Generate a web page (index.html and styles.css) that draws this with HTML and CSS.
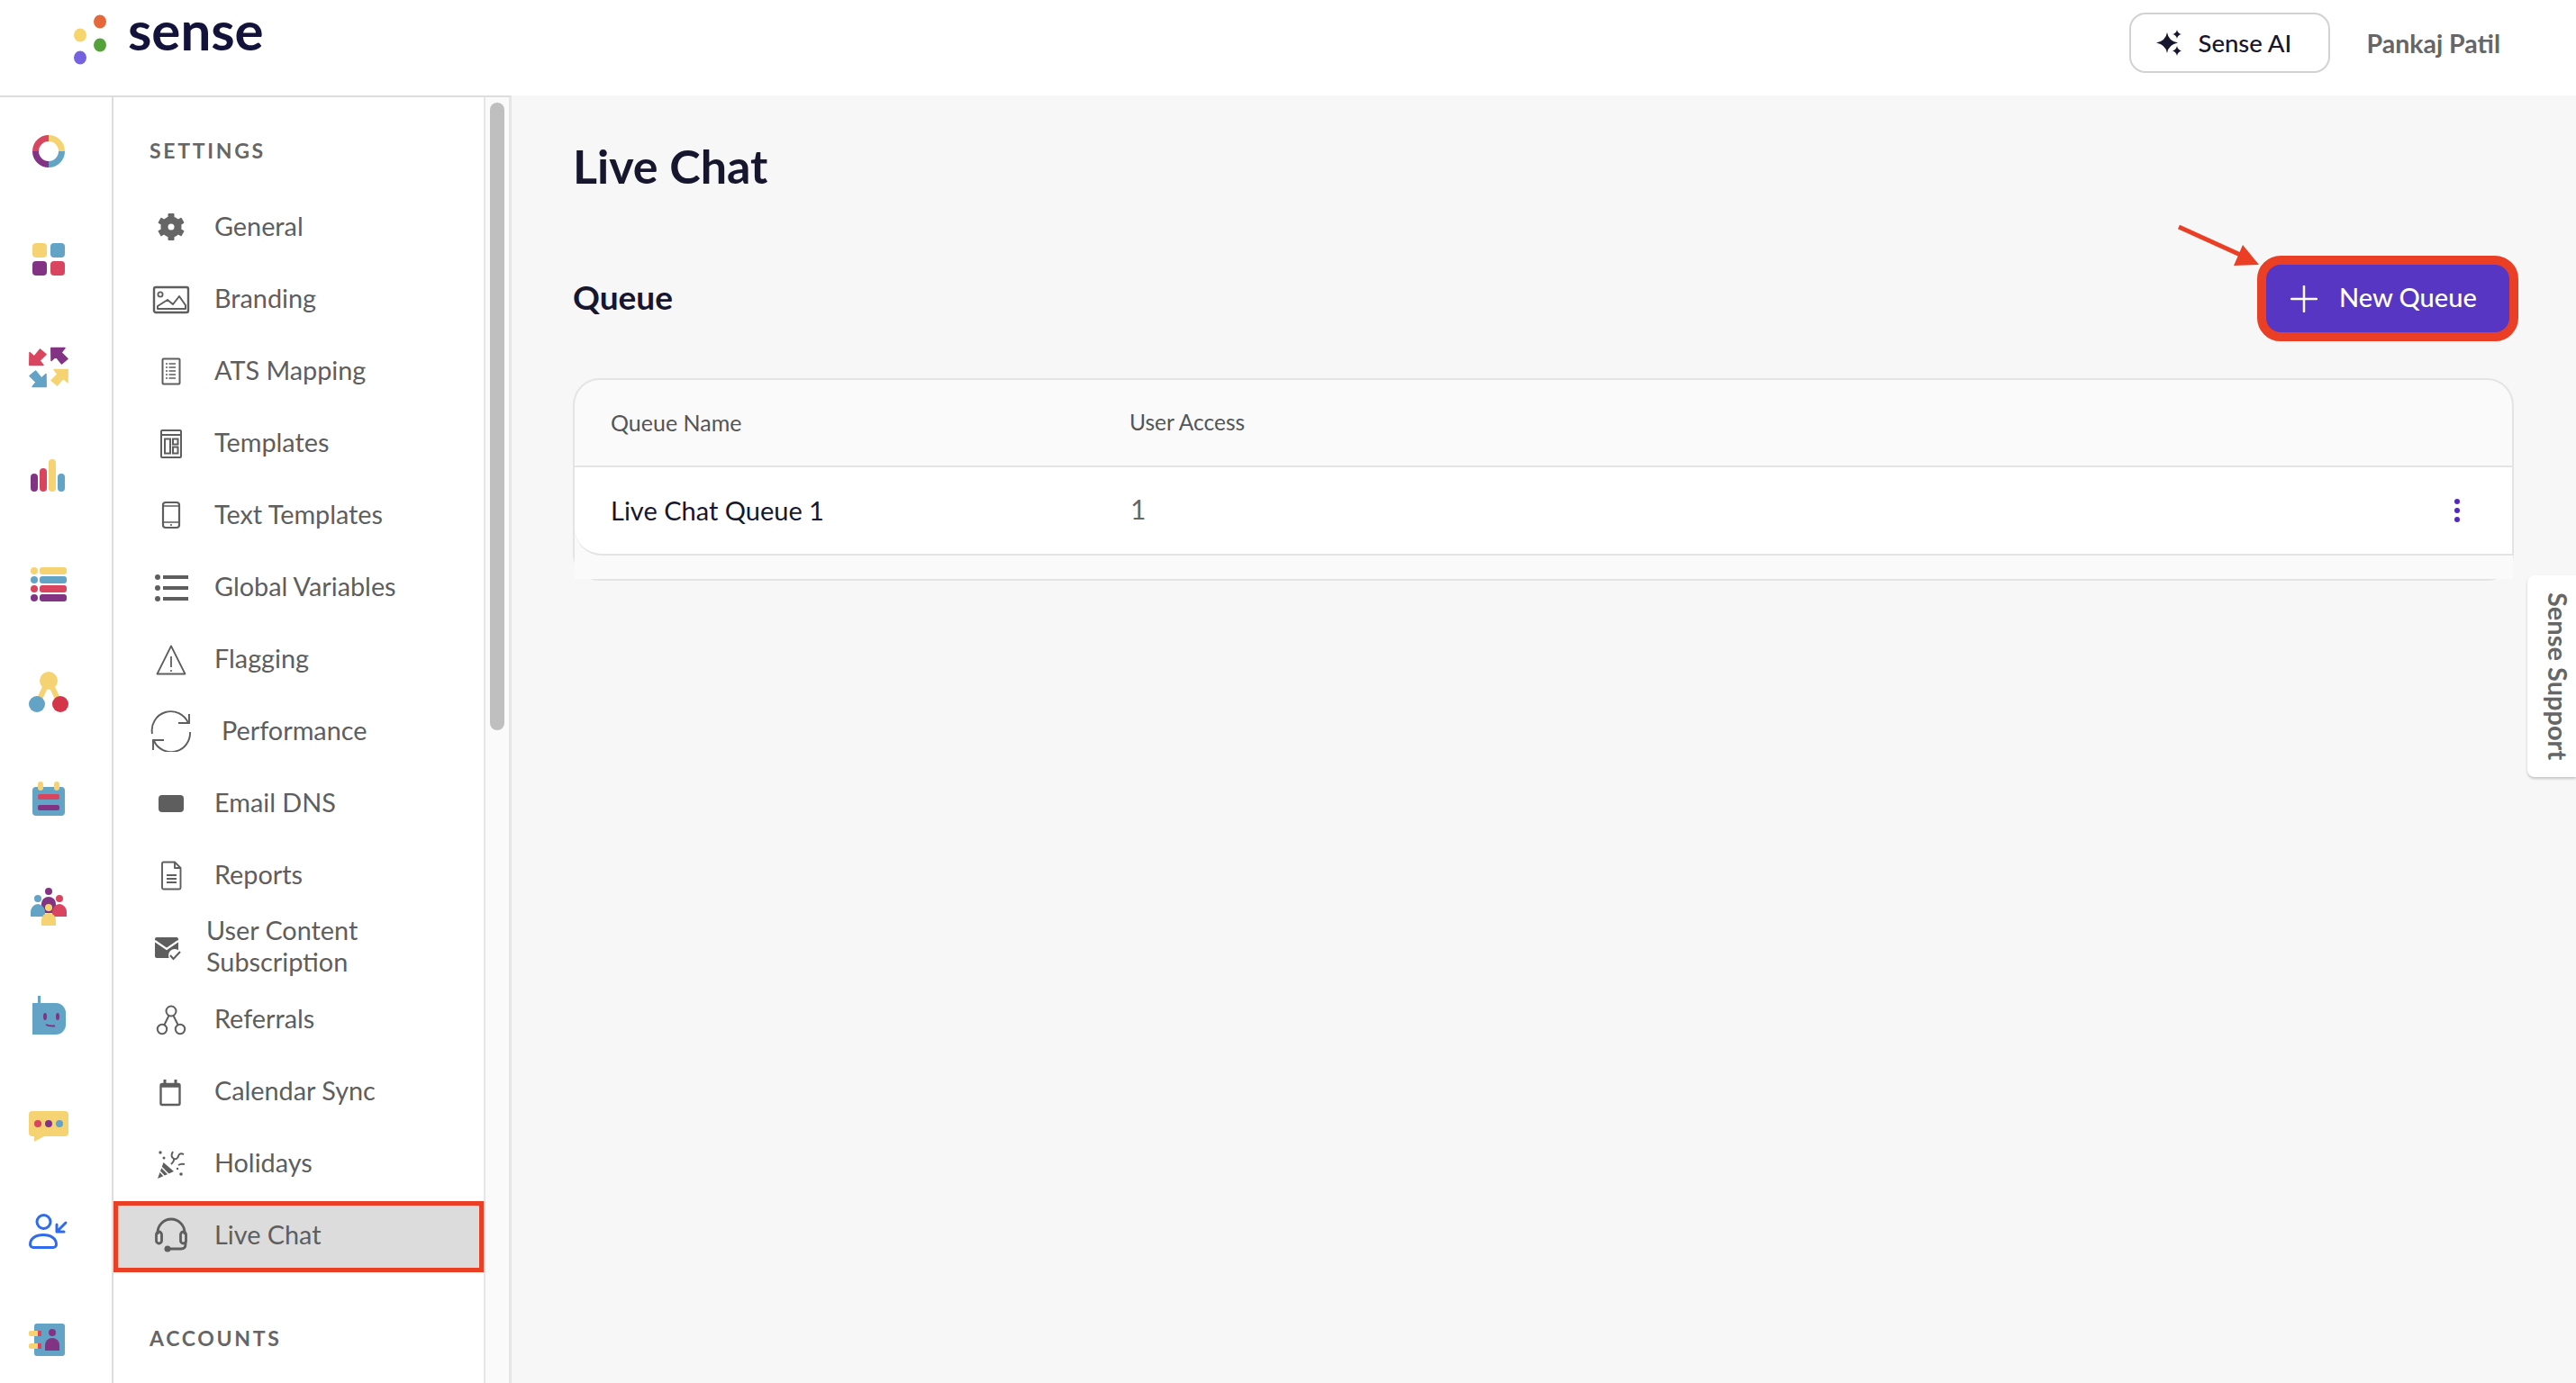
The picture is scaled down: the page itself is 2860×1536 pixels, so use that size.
FILE: index.html
```html
<!DOCTYPE html>
<html lang="en">
<head>
<meta charset="utf-8">
<title>Live Chat</title>
<link rel="stylesheet" href="styles.css">
</head>
<body>
<header class="topbar">
  <div class="logo">
    <svg class="logo-dots" viewBox="0 0 38 60" width="38" height="60">
      <ellipse cx="31" cy="10" rx="7" ry="7.5" fill="#e5673a"/>
      <ellipse cx="9" cy="25" rx="7" ry="7.5" fill="#f7d56d"/>
      <ellipse cx="31" cy="36" rx="7" ry="7.5" fill="#56a23a"/>
      <ellipse cx="9" cy="50" rx="7" ry="7.5" fill="#7562e0"/>
    </svg>
    <span class="logo-text">sense</span>
  </div>
  <div class="top-actions">
    <button class="ai-btn">
      <svg viewBox="0 0 28 29" width="28" height="29" fill="#17162f">
        <path d="M12 3 Q13.500 12.500 24 14.500 Q13.500 16.500 12 26 Q10.500 16.500 0 14.500 Q10.500 12.500 12 3Z"/>
        <path d="M23 0 Q23.800 4.200 28 5 Q23.800 5.800 23 10 Q22.200 5.800 18 5 Q22.200 4.200 23 0Z"/>
        <path d="M23 18 Q23.800 22.200 28 23.500 Q23.800 24.800 23 29 Q22.200 24.800 18 23.500 Q22.200 22.200 23 18Z"/>
      </svg>
      <span>Sense AI</span>
    </button>
    <span class="user-name">Pankaj Patil</span>
  </div>
</header>

<div class="layout">
  <nav class="rail">
    <div class="rail-item"><svg viewBox="0 0 60 60" width="60" height="60" fill="none" stroke-width="7">
      <path d="M30 15.500A14.500 14.500 0 0 1 44.500 30" stroke="#f6d372"/>
      <path d="M44.500 30A14.500 14.500 0 0 1 30 44.500" stroke="#62a3c6"/>
      <path d="M30 44.500A14.500 14.500 0 0 1 15.500 30" stroke="#823384"/>
      <path d="M15.500 30A14.500 14.500 0 0 1 30 15.500" stroke="#d9455f"/>
    </svg></div>
    <div class="rail-item"><svg viewBox="0 0 60 60" width="60" height="60">
      <rect x="12" y="12" width="16" height="16" rx="4" fill="#f6d372"/>
      <rect x="32" y="12" width="16" height="16" rx="4" fill="#62a3c6"/>
      <rect x="12" y="32" width="16" height="16" rx="4" fill="#823384"/>
      <rect x="32" y="32" width="16" height="16" rx="4" fill="#d9455f"/>
    </svg></div>
    <div class="rail-item"><svg viewBox="0 0 60 60" width="60" height="60" stroke-width="1.500" stroke-linejoin="round">
      <polygon transform="translate(8 8)" points="0.800,19.500 1,5.500 6,10 12.500,2 19,7.500 12,14.500 16,19.500" fill="#d9455f" stroke="#d9455f"/>
      <polygon transform="translate(32 28) scale(1 -1)" points="0.800,19.500 1,5.500 6,10 12.500,2 19,7.500 12,14.500 16,19.500" fill="#823384" stroke="#823384"/>
      <polygon transform="translate(28 32) scale(-1 1)" points="0.800,19.500 1,5.500 6,10 12.500,2 19,7.500 12,14.500 16,19.500" fill="#62a3c6" stroke="#62a3c6"/>
      <polygon transform="translate(52 52) scale(-1 -1)" points="0.800,19.500 1,5.500 6,10 12.500,2 19,7.500 12,14.500 16,19.500" fill="#f6d372" stroke="#f6d372"/>
    </svg></div>
    <div class="rail-item"><svg viewBox="0 0 60 60" width="60" height="60">
      <rect x="10" y="28" width="8" height="20" rx="4" fill="#823384"/>
      <rect x="20" y="22" width="8" height="26" rx="4" fill="#d9455f"/>
      <rect x="30" y="12" width="8" height="36" rx="4" fill="#f6d372"/>
      <rect x="40" y="28" width="8" height="20" rx="4" fill="#62a3c6"/>
    </svg></div>
    <div class="rail-item"><svg viewBox="0 0 60 60" width="60" height="60">
      <circle cx="14" cy="16" r="4" fill="#f6d372"/><rect x="20" y="12" width="30" height="8" rx="3" fill="#f6d372"/>
      <circle cx="14" cy="26" r="4" fill="#62a3c6"/><rect x="20" y="22" width="30" height="8" rx="3" fill="#62a3c6"/>
      <circle cx="14" cy="36" r="4" fill="#d9455f"/><rect x="20" y="32" width="30" height="8" rx="3" fill="#d9455f"/>
      <circle cx="14" cy="46" r="4" fill="#823384"/><rect x="20" y="42" width="30" height="8" rx="3" fill="#823384"/>
    </svg></div>
    <div class="rail-item"><svg viewBox="0 0 60 60" width="60" height="60">
      <path d="M30 17L20 38M30 17L40 38" stroke="#f6d372" stroke-width="6"/>
      <circle cx="30" cy="18" r="10" fill="#f6d372"/>
      <circle cx="17" cy="44" r="9" fill="#62a3c6"/>
      <circle cx="43" cy="44" r="9" fill="#d43549"/>
    </svg></div>
    <div class="rail-item"><svg viewBox="0 0 60 60" width="60" height="60">
      <rect x="12" y="16" width="36" height="32" rx="4" fill="#62a3c6"/>
      <rect x="18" y="10" width="6" height="10" rx="3" fill="#f6d372"/>
      <rect x="36" y="10" width="6" height="10" rx="3" fill="#f6d372"/>
      <rect x="18" y="24" width="24" height="6" rx="2" fill="#d9455f"/>
      <rect x="18" y="36" width="24" height="6" rx="2" fill="#823384"/>
    </svg></div>
    <div class="rail-item"><svg viewBox="0 0 60 60" width="60" height="60">
      <circle cx="18" cy="20" r="4" fill="#62a3c6"/><circle cx="42" cy="20" r="4" fill="#d9455f"/><circle cx="30" cy="12" r="4" fill="#823384"/>
      <path d="M22 36V26a8 8 0 0 1 16 0V36Z" fill="#823384"/>
      <path d="M10 40V35a8 9 0 0 1 16 0V40Z" fill="#62a3c6"/>
      <path d="M34 40V35a8 9 0 0 1 16 0V40Z" fill="#d9455f"/>
      <circle cx="30" cy="30" r="4" fill="#f6d372"/>
      <path d="M22 50V44a8 8 0 0 1 16 0V50Z" fill="#f6d372"/>
    </svg></div>
    <div class="rail-item"><svg viewBox="0 0 60 60" width="60" height="60">
      <rect x="18" y="8" width="3" height="9" fill="#62a3c6"/>
      <path d="M12 16H38a11 11 0 0 1 11 11V40a11 11 0 0 1-11 11H12Z" fill="#62a3c6"/>
      <ellipse cx="26" cy="31" rx="2" ry="4" fill="#823384"/><ellipse cx="40" cy="31" rx="2" ry="4" fill="#823384"/>
      <path d="M27 40q3 2 10 1.500" stroke="#823384" stroke-width="2" fill="none"/>
    </svg></div>
    <div class="rail-item"><svg viewBox="0 0 60 60" width="60" height="60">
      <rect x="8" y="16" width="44" height="28" rx="4" fill="#f6d372"/>
      <polygon points="14,42 14,50 27,43" fill="#f6d372"/>
      <circle cx="18" cy="30" r="4" fill="#d9455f"/><circle cx="30" cy="30" r="4" fill="#823384"/><circle cx="42" cy="30" r="4" fill="#62a3c6"/>
    </svg></div>
    <div class="rail-item"><svg viewBox="0 0 60 60" width="60" height="60" fill="none" stroke="#2f6bec" stroke-width="3" stroke-linecap="round" stroke-linejoin="round">
      <circle cx="24.500" cy="19" r="7.500"/>
      <path d="M13 47.500H35a3.500 3.500 0 0 0 3.500-3.500C38.500 38 33 33.500 24 33.500S9.500 38 9.500 44A3.500 3.500 0 0 0 13 47.500Z"/>
      <path d="M49 20L39 30M39 22V30H47"/>
    </svg></div>
    <div class="rail-item"><svg viewBox="0 0 60 60" width="60" height="60">
      <rect x="14" y="12" width="34" height="36" rx="3" fill="#62a3c6"/>
      <rect x="8" y="20" width="11" height="6" rx="2" fill="#f6d372"/><rect x="18" y="20" width="4" height="6" fill="#d9455f"/>
      <rect x="8" y="34" width="11" height="6" rx="2" fill="#f6d372"/><rect x="18" y="34" width="4" height="6" fill="#d9455f"/>
      <circle cx="34" cy="22" r="4" fill="#823384"/>
      <path d="M26 42V36a8 8 0 0 1 16 0V42Z" fill="#823384"/>
    </svg></div>
  </nav>

  <aside class="side">
    <div class="side-list">
      <h3 class="side-title first">SETTINGS</h3>
      <a class="side-row"><svg class="ico" viewBox="0 0 46 46" fill="#666">
        <g><rect x="19.500" y="8" width="7" height="6" rx="1"/><rect x="19.500" y="8" width="7" height="6" rx="1" transform="rotate(60 23 23)"/><rect x="19.500" y="8" width="7" height="6" rx="1" transform="rotate(120 23 23)"/><rect x="19.500" y="8" width="7" height="6" rx="1" transform="rotate(180 23 23)"/><rect x="19.500" y="8" width="7" height="6" rx="1" transform="rotate(240 23 23)"/><rect x="19.500" y="8" width="7" height="6" rx="1" transform="rotate(300 23 23)"/></g>
        <circle cx="23" cy="23" r="7.500" fill="none" stroke="#666" stroke-width="8"/>
      </svg><span>General</span></a>
      <a class="side-row"><svg class="ico" viewBox="0 0 46 46" fill="none" stroke="#5e5e5e">
        <rect x="4" y="10" width="38" height="28" rx="2" stroke-width="2.400"/>
        <circle cx="11" cy="18" r="2.600" stroke-width="1.800"/>
        <path d="M8 34V31L19 24L25 29L32 20L39 30V34Z" stroke-width="2" stroke-linejoin="round"/>
      </svg><span>Branding</span></a>
      <a class="side-row"><svg class="ico" viewBox="0 0 46 46" fill="none" stroke="#5e5e5e">
        <rect x="13.500" y="9.500" width="19" height="28" rx="1" stroke-width="2"/>
        <path d="M20.500 15H28M20.500 19H28M20.500 23H28M20.500 27H28M20.500 31H28" stroke-width="1.600"/>
        <path d="M17 15H19M17 19H19M17 23H19M17 27H19M17 31H19" stroke-width="1.600"/>
      </svg><span>ATS Mapping</span></a>
      <a class="side-row"><svg class="ico" viewBox="0 0 46 46" fill="none" stroke="#5e5e5e" stroke-width="2">
        <rect x="12" y="9" width="22" height="30" rx="1"/>
        <path d="M12 14H34"/>
        <rect x="16" y="18.500" width="6" height="16"/>
        <rect x="25" y="18.500" width="5.500" height="6"/>
        <rect x="25" y="27.500" width="5.500" height="7"/>
      </svg><span>Templates</span></a>
      <a class="side-row"><svg class="ico" viewBox="0 0 46 46" fill="none" stroke="#5e5e5e" stroke-width="2.200">
        <rect x="14" y="9" width="18" height="28" rx="3"/>
        <path d="M14 13H32M14 31H32" stroke-width="1.500"/>
        <circle cx="23" cy="34" r="1.100" fill="#5e5e5e" stroke="none"/>
      </svg><span>Text Templates</span></a>
      <a class="side-row"><svg class="ico" viewBox="0 0 46 46" fill="#5e5e5e">
        <circle cx="8" cy="12" r="3"/><circle cx="8" cy="24" r="3"/><circle cx="8" cy="36" r="3"/>
        <rect x="14" y="10" width="28" height="4"/><rect x="14" y="22" width="28" height="4"/><rect x="14" y="34" width="28" height="4"/>
      </svg><span>Global Variables</span></a>
      <a class="side-row"><svg class="ico" viewBox="0 0 46 46" fill="none" stroke="#5e5e5e" stroke-width="1.800" stroke-linejoin="round">
        <path d="M23 8.500L38.500 39.500H7.500Z"/>
        <path d="M23 20V32"/>
        <circle cx="23" cy="36" r="1.100" fill="#5e5e5e" stroke="none"/>
      </svg><span>Flagging</span></a>
      <a class="side-row wide-gap"><svg class="ico" viewBox="0 0 46 46" fill="none" stroke="#5e5e5e" stroke-width="1.900">
        <path d="M2 26A21 21 0 0 1 42 14"/><path d="M43 4V14H31"/>
        <path d="M44 24A21 21 0 0 1 4 34"/><path d="M15 33H3V44"/>
      </svg><span>Performance</span></a>
      <a class="side-row"><svg class="ico" viewBox="0 0 46 46" fill="#5e5e5e"><rect x="9" y="14" width="28" height="19" rx="4"/></svg><span>Email DNS</span></a>
      <a class="side-row"><svg class="ico" viewBox="0 0 46 46" fill="none" stroke="#5e5e5e" stroke-width="1.900" stroke-linejoin="round">
        <path d="M14.500 8.500H27L33.500 15V37a1.500 1.500 0 0 1-1.500 1.500H14.500A1.500 1.500 0 0 1 13 37V10A1.500 1.500 0 0 1 14.500 8.500Z"/>
        <path d="M27 8.500V15H33.500"/>
        <path d="M18 23H29M18 27H29M18 31H29"/>
      </svg><span>Reports</span></a>
      <a class="side-row tight-gap"><svg class="ico" viewBox="0 0 46 46">
        <rect x="5" y="12" width="26" height="23" rx="2" fill="#5e5e5e"/>
        <path d="M5 16L18 25L31 16" fill="none" stroke="#fff" stroke-width="2.200"/>
        <circle cx="27" cy="32" r="7" fill="#fff"/>
        <path d="M22 32L25.500 36L33 28" fill="none" stroke="#5e5e5e" stroke-width="2"/>
      </svg><span>User Content<br>Subscription</span></a>
      <a class="side-row"><svg class="ico" viewBox="0 0 46 46" fill="none" stroke="#5e5e5e" stroke-width="2">
        <circle cx="23" cy="14" r="5.500"/><circle cx="13" cy="34" r="5.200"/><circle cx="33" cy="34" r="5.200"/>
        <path d="M20.500 19L15.500 29M25.500 19L30.500 29"/>
      </svg><span>Referrals</span></a>
      <a class="side-row"><svg class="ico" viewBox="0 0 46 46" fill="none" stroke="#5e5e5e" stroke-width="2.400">
        <rect x="11.500" y="15" width="21" height="23" rx="1.500"/>
        <path d="M11.500 17H32.500" stroke-width="3.500"/>
        <path d="M16 10V15M28 10V15" stroke-width="3"/>
      </svg><span>Calendar Sync</span></a>
      <a class="side-row"><svg class="ico" viewBox="0 0 46 46" fill="#5e5e5e">
        <polygon points="8,40 14.500,22 26,32"/>
        <path d="M12 27L21 36M10.500 32L16 38" stroke="#fff" stroke-width="1.500"/>
        <path d="M25 10q-3 5 0 7t-2 7M37 13q-5-2-6 2t-5 3M38 24q-4-1-7 1" fill="none" stroke="#5e5e5e" stroke-width="2"/>
        <circle cx="11" cy="11" r="1.700"/><circle cx="15" cy="17" r="1.500"/><circle cx="34" cy="35" r="1.800"/><circle cx="30" cy="29" r="1.200"/>
      </svg><span>Holidays</span></a>
      <a class="side-row active"><svg class="ico" viewBox="0 0 46 46" fill="none" stroke="#5e5e5e" stroke-width="2.800">
        <path d="M8 22V20a15 15 0 0 1 30 0V22"/>
        <rect x="6.500" y="19" width="6" height="13" rx="3"/><rect x="33.500" y="19" width="6" height="13" rx="3"/>
        <path d="M39 30V33q0 5-5 5H22"/>
        <circle cx="19" cy="38" r="3.500" fill="#5e5e5e" stroke="none"/>
      </svg><span>Live Chat</span></a>
      <h3 class="side-title">ACCOUNTS</h3>
    </div>
    <div class="scroll-track"><div class="scroll-thumb"></div></div>
  </aside>

  <main class="main">
    <h1 class="page-title">Live Chat</h1>
    <div class="section-head">
      <h2 class="section-title">Queue</h2>
      <button class="new-btn">
        <svg viewBox="0 0 30 30" width="30" height="30" fill="none" stroke="#fff" stroke-width="2.500" stroke-linecap="round"><path d="M15 1V29M1 15H29"/></svg>
        <span>New Queue</span>
      </button>
    </div>
    <div class="table">
      <div class="thead"><span>Queue Name</span><span>User Access</span></div>
      <div class="trow">
        <span class="cell-name">Live Chat Queue 1</span>
        <span class="cell-count">1</span>
        <span class="kebab"><i></i><i></i><i></i></span>
      </div>
      <div class="tfoot"></div>
    </div>
    <svg class="annot-arrow" viewBox="0 0 92 46" width="92" height="46">
      <line x1="1" y1="2" x2="76" y2="36" stroke="#ea3f25" stroke-width="5"/>
      <polygon points="72,22 62,45 90,44" fill="#ea3f25"/>
    </svg>
  </main>
</div>
<div class="support-tab"><span>Sense Support</span></div>
</body>
</html>
```
FILE: styles.css
```css
* { box-sizing: border-box; }
html, body { margin: 0; padding: 0; }
body {
  width: 2860px;
  height: 1536px;
  overflow: hidden;
  position: relative;
  background: #f7f7f7;
  font-family: "Lato", "Noto Sans", sans-serif;
  color: #17162f;
}
.topbar {
  height: 106px;
  background: #fff;
  display: flex;
  justify-content: space-between;
  align-items: flex-start;
}
.logo {
  display: flex;
  align-items: flex-start;
  margin: 14px 0 0 80px;
}
.logo-text {
  margin-left: 24px;
  margin-top: -5px;
  font-size: 60px;
  line-height: 48px;
  font-weight: 700;
  color: #13123a;
}
.top-actions {
  display: flex;
  align-items: center;
  margin-top: 14px;
  padding-right: 84px;
}
.ai-btn {
  width: 223px;
  height: 67px;
  background: #fff;
  border: 2px solid #d2d2d2;
  border-radius: 18px;
  display: flex;
  align-items: center;
  padding: 0 0 0 28px;
  gap: 19px;
  font: 500 27.500px "Lato", sans-serif;
  color: #17162f;
}
.user-name {
  margin-left: 41px;
  font-size: 28.500px;
  font-weight: 700;
  color: #666;
}
.layout {
  display: flex;
  height: 1430px;
}
.rail {
  width: 126px;
  background: #fff;
  border-top: 2px solid #ddd;
  border-right: 2px solid #ddd;
  overflow: hidden;
  flex: none;
}
.rail-item {
  height: 120px;
  display: flex;
  align-items: center;
  justify-content: center;
  padding-right: 16px;
}
.rail-item svg { display: block; }
.side {
  width: 442px;
  flex: none;
  display: flex;
  background: #fff;
  border-top: 2px solid #ddd;
  border-right: 3px solid #e6e6e6;
  overflow: hidden;
}
.side-list {
  width: 411px;
  flex: none;
}
.side-title {
  margin: 59px 0 0;
  padding-left: 40px;
  font-size: 23px;
  line-height: 28px;
  font-weight: 700;
  letter-spacing: 2.700px;
  color: #666;
}
.side-title.first {
  margin-top: 45px;
  margin-bottom: 31px;
}
.side-row {
  height: 80px;
  display: flex;
  align-items: center;
  padding: 0 0 2px 41px;
  gap: 25px;
  font-size: 28.800px;
  line-height: 35px;
  color: #5e5e5e;
}
.side-row .ico { width: 46px; height: 46px; flex: none; display: block; margin-bottom: -2px; }
.wide-gap { gap: 33px; }
.tight-gap { gap: 16px; }
.side-row.active {
  height: 79px;
  margin-top: 2px;
  background: #dcdcdc;
  border: 5px solid #ea3f25;
  padding: 0 0 5px 36px;
}
.scroll-track {
  flex: 1;
  background: #fafafa;
  border-left: 2px solid #e6e6e6;
  padding: 6px 5px 0 5px;
}
.scroll-thumb {
  width: 16px;
  height: 697px;
  border-radius: 8px;
  background: #bfbfbf;
}
.main {
  flex: 1;
  position: relative;
  padding: 48px 69px 0 68px;
}
.page-title {
  margin: 0;
  font-size: 52px;
  line-height: 60px;
  font-weight: 700;
  color: #17162f;
}
.section-head {
  display: flex;
  justify-content: space-between;
  align-items: center;
  margin: 70px -5px 41px 0;
}
.section-title {
  margin: -5px 0 0;
  font-size: 37px;
  font-weight: 700;
  color: #17162f;
}
.new-btn {
  width: 290px;
  height: 95px;
  background: #5736c4;
  border: 10px solid #ea3f25;
  border-radius: 26px;
  display: flex;
  align-items: center;
  padding: 0 0 5px 27px;
  gap: 24px;
  font: 500 29px "Lato", sans-serif;
  color: #fff;
}
.new-btn svg { display: block; margin-top: 5px; }
.table {
  border: 2px solid #e4e4e4;
  border-radius: 30px;
  background: #fafafa;
}
.thead {
  height: 97px;
  display: grid;
  grid-template-columns: 575px 1fr;
  align-items: center;
  padding: 0 0 2px 40px;
  border-bottom: 2px solid #e4e4e4;
  font-size: 25px;
  color: #555;
}
.thead span + span { font-size: 24.500px; margin-left: 1px; }
.trow {
  height: 98px;
  display: grid;
  grid-template-columns: 575px 1fr auto;
  align-items: center;
  padding: 0 58px 2px 40px;
  background: #fff;
  border-bottom: 2px solid #e4e4e4;
  border-bottom-left-radius: 30px;
}
.cell-name { font-size: 29px; color: #17162f; }
.cell-count { font-size: 30px; color: #666; margin: -3px 0 0 2px; }
.kebab { display: flex; flex-direction: column; gap: 4px; margin-top: 2px; }
.kebab i { display: block; width: 6px; height: 6px; border-radius: 50%; background: #5128c8; }
.tfoot { height: 26px; background: #fafafa; margin: 0 -1px 0 0; }
.annot-arrow {
  position: absolute;
  left: 1850px;
  top: 144px;
}
.support-tab {
  position: absolute;
  left: 2806px;
  top: 639px;
  width: 54px;
  height: 224px;
  background: #fff;
  border-radius: 8px 0 0 8px;
  box-shadow: 0 2px 3px rgba(0,0,0,.2);
  display: flex;
  align-items: center;
  justify-content: center;
  padding-left: 14px;
}
.support-tab span {
  writing-mode: vertical-rl;
  font-size: 29px;
  font-weight: 700;
  color: #666;
  white-space: nowrap;
}
```
